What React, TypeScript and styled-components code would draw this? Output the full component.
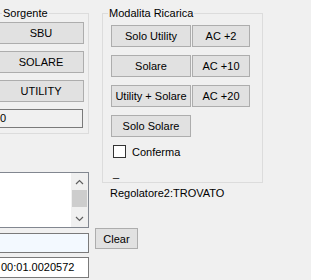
import React from "react";
import styled, { createGlobalStyle } from "styled-components";

const GlobalStyle = createGlobalStyle`
    html, body {
        margin: 0;
        padding: 0;
        background: #f0f0f0;
    }
    body {
        font-family: "Liberation Sans", Arial, sans-serif;
        font-size: 11px;
        color: #000;
    }
`;

const Window = styled.div`
    width: 311px;
    height: 280px;
    overflow: hidden;
    box-sizing: border-box;
    padding-top: 7px;
    display: flex;
    align-items: flex-start;
    column-gap: 6px;
`;

const LeftColumn = styled.div`
    margin-left: -10px;
    width: 99px;
    flex-shrink: 0;
    display: flex;
    flex-direction: column;
`;

const RightColumn = styled.div`
    width: 200px;
    display: flex;
    flex-direction: column;
    align-items: flex-start;
`;

const GroupBox = styled.fieldset<{ $width: number; $height: number; $offset: number }>`
    box-sizing: border-box;
    margin: 0 0 0 ${p => p.$offset}px;
    padding: 0;
    min-width: 0;
    width: ${p => p.$width}px;
    height: ${p => p.$height}px;
    border: 1px solid #dcdcdc;
`;

const Caption = styled.legend`
    margin-left: 5px;
    padding: 0 1px;
    font-size: 11px;
    line-height: 13px;
`;

const SourceList = styled.div`
    padding-top: 2px;
    display: flex;
    flex-direction: column;
    row-gap: 7px;
`;

const WinButton = styled.button<{ $width: number; $height?: number }>`
    box-sizing: border-box;
    width: ${p => p.$width}px;
    height: ${p => p.$height ?? 22}px;
    margin: 0;
    padding: 0;
    background: #e1e1e1;
    border: 1px solid #adadad;
    border-radius: 0;
    font-family: inherit;
    font-size: 11px;
    color: #000;
    flex-shrink: 0;
`;

const SourceButton = styled(WinButton)`
    margin-left: 1px;
`;

const TextBox = styled.div<{ $bg: string; $height: number }>`
    box-sizing: border-box;
    height: ${p => p.$height}px;
    background: ${p => p.$bg};
    border: 1px solid #7a7a7a;
    padding: 0 2px;
    line-height: ${p => p.$height - 2}px;
    white-space: nowrap;
    overflow: hidden;
`;

const ReadOnlyBox = styled(TextBox)`
    width: 86px;
`;

const ModeGrid = styled.div`
    padding: 5px 0 0 8px;
    display: flex;
    flex-direction: column;
    row-gap: 8px;
`;

const ModeRow = styled.div`
    display: flex;
    column-gap: 1px;
`;

const CheckRow = styled.label`
    margin: 8px 0 0 10px;
    display: flex;
    align-items: center;
    column-gap: 6px;
    height: 13px;
`;

const CheckBox = styled.span`
    box-sizing: border-box;
    width: 13px;
    height: 13px;
    background: #fff;
    border: 1px solid #333;
`;

const Dash = styled.div`
    margin: 9px 0 0 10px;
    line-height: 13px;
`;

const StatusLabel = styled.div`
    margin: 4px 0 0 15px;
    line-height: 13px;
`;

const ClearButton = styled(WinButton)`
    margin-top: 28px;
`;

const ListBox = styled.div`
    box-sizing: border-box;
    margin-top: 38px;
    height: 56px;
    background: #fff;
    border: 1px solid #828790;
    display: flex;
    justify-content: flex-end;
`;

const ScrollBar = styled.div`
    width: 17px;
    background: #f0f0f0;
    display: flex;
    flex-direction: column;
`;

const ScrollArrow = styled.div`
    height: 17px;
    display: flex;
    align-items: center;
    justify-content: center;
`;

const ScrollTrack = styled.div`
    flex: 1;
    display: flex;
    flex-direction: column;
`;

const Thumb = styled.div`
    height: 17px;
    margin: 0 1px;
    background: #cdcdcd;
`;

const InputBox = styled(TextBox)`
    margin-top: 5px;
`;

const TimeBox = styled(TextBox)`
    margin-top: 4px;
    padding-left: 10px;
`;

const Chevron = ({ up }: { up?: boolean }) => (
    <svg width="9" height="6" viewBox="0 0 9 6">
        <polyline
            points={up ? "1,5 4.5,1.5 8,5" : "1,1 4.5,4.5 8,1"}
            fill="none"
            stroke="#606060"
            strokeWidth="1.2"
        />
    </svg>
);

const modes = [
    { label: "Solo Utility", ac: "AC +2" },
    { label: "Solare", ac: "AC +10" },
    { label: "Utility + Solare", ac: "AC +20" },
];

const App = () => {
    return (
        <>
            <GlobalStyle />
            <Window>
                <LeftColumn>
                    <GroupBox $width={93} $height={127} $offset={6}>
                        <Caption>Sorgente</Caption>
                        <SourceList>
                            <SourceButton $width={86}>SBU</SourceButton>
                            <SourceButton $width={86}>SOLARE</SourceButton>
                            <SourceButton $width={86}>UTILITY</SourceButton>
                            <ReadOnlyBox $bg="#f0f0f0" $height={19}>0</ReadOnlyBox>
                        </SourceList>
                    </GroupBox>
                    <ListBox>
                        <ScrollBar>
                            <ScrollArrow><Chevron up /></ScrollArrow>
                            <ScrollTrack><Thumb /></ScrollTrack>
                            <ScrollArrow><Chevron /></ScrollArrow>
                        </ScrollBar>
                    </ListBox>
                    <InputBox $bg="#f3f9ff" $height={20} />
                    <TimeBox $bg="#fff" $height={21}>00:01.0020572</TimeBox>
                </LeftColumn>
                <RightColumn>
                    <GroupBox $width={161} $height={176} $offset={7}>
                        <Caption>Modalita Ricarica</Caption>
                        <ModeGrid>
                            {modes.map(m => (
                                <ModeRow key={m.label}>
                                    <WinButton $width={80}>{m.label}</WinButton>
                                    <WinButton $width={58}>{m.ac}</WinButton>
                                </ModeRow>
                            ))}
                            <ModeRow>
                                <WinButton $width={80}>Solo Solare</WinButton>
                            </ModeRow>
                        </ModeGrid>
                        <CheckRow>
                            <CheckBox />
                            Conferma
                        </CheckRow>
                        <Dash>_</Dash>
                    </GroupBox>
                    <StatusLabel>Regolatore2:TROVATO</StatusLabel>
                    <ClearButton $width={43} $height={21}>Clear</ClearButton>
                </RightColumn>
            </Window>
        </>
    );
};

export default App;
